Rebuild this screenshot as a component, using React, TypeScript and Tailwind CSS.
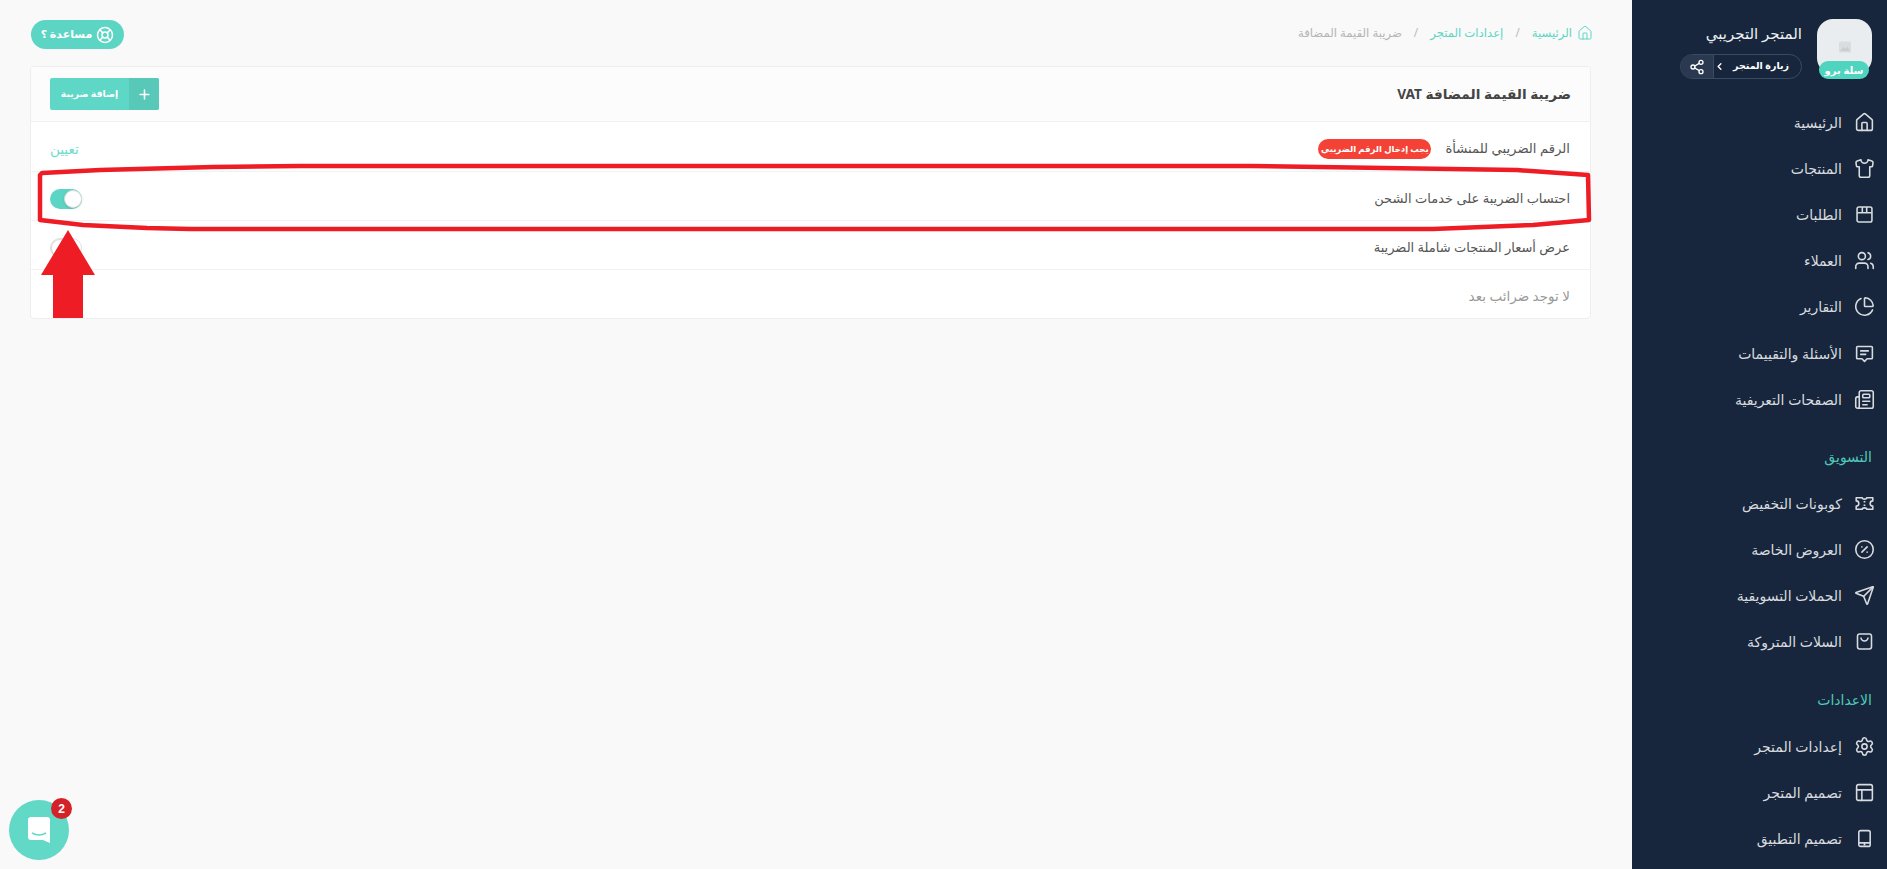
import React from "react";
import { ChevronRight, Share2, Settings, Send, Plus, LifeBuoy, Shirt, Users, PieChart, Newspaper, CirclePercent, House, PanelsTopLeft } from "lucide-react";

type IconProps = { className?: string; strokeWidth?: number };

function BoxIcon({ className, strokeWidth }: IconProps) {
  return (
    <svg className={className} viewBox="0 0 24 24" fill="none" stroke="currentColor" strokeWidth={strokeWidth}>
      <rect x="3.5" y="3.5" width="17" height="17" rx="2" />
      <path d="M3.5 10h17M9.5 3.5V10M14.5 3.5V10" />
    </svg>
  );
}

function ChatIcon({ className, strokeWidth }: IconProps) {
  return (
    <svg className={className} viewBox="0 0 24 24" fill="none" stroke="currentColor" strokeWidth={strokeWidth} strokeLinejoin="round">
      <path d="M4 4h16a1 1 0 0 1 1 1v12a1 1 0 0 1-1 1h-5l-3 3-3-3H4a1 1 0 0 1-1-1V5a1 1 0 0 1 1-1z" />
      <path d="M7 9h10M7 13h7" />
    </svg>
  );
}

function TicketIcon({ className, strokeWidth }: IconProps) {
  return (
    <svg className={className} viewBox="0 0 24 24" fill="none" stroke="currentColor" strokeWidth={strokeWidth} strokeLinejoin="round">
      <path d="M2.5 5.5H9.5a2.5 1.5 0 0 0 5 0h7v3.5a3 3 0 0 0 0 6v3.5h-7a2.5 1.5 0 0 0-5 0H2.5V15a3 3 0 0 0 0-6z" />
      <path d="M11 10h2M11 14h2" />
    </svg>
  );
}

function BagIcon({ className, strokeWidth }: IconProps) {
  return (
    <svg className={className} viewBox="0 0 24 24" fill="none" stroke="currentColor" strokeWidth={strokeWidth}>
      <rect x="4" y="3.5" width="16" height="17" rx="2.5" />
      <path d="M8 7.5a4 4 0 0 0 8 0" />
    </svg>
  );
}

function DeviceIcon({ className, strokeWidth }: IconProps) {
  return (
    <svg className={className} viewBox="0 0 24 24" fill="none" stroke="currentColor" strokeWidth={strokeWidth}>
      <rect x="5.5" y="3" width="13" height="18" rx="2" />
      <path d="M5.5 17h13M11 19h2" />
    </svg>
  );
}

const mainLinks = [
  { label: "الرئيسية", icon: House },
  { label: "المنتجات", icon: Shirt },
  { label: "الطلبات", icon: BoxIcon },
  { label: "العملاء", icon: Users },
  { label: "التقارير", icon: PieChart },
  { label: "الأسئلة والتقييمات", icon: ChatIcon },
  { label: "الصفحات التعريفية", icon: Newspaper },
];

const marketingLinks = [
  { label: "كوبونات التخفيض", icon: TicketIcon },
  { label: "العروض الخاصة", icon: CirclePercent },
  { label: "الحملات التسويقية", icon: Send },
  { label: "السلات المتروكة", icon: BagIcon },
];

const settingsLinks = [
  { label: "إعدادات المتجر", icon: Settings },
  { label: "تصميم المتجر", icon: PanelsTopLeft },
  { label: "تصميم التطبيق", icon: DeviceIcon },
];

function NavList({ links }: { links: { label: string; icon: React.ElementType }[] }) {
  return (
    <ul className="flex flex-col">
      {links.map((link) => (
        <li key={link.label} className="flex h-[46.2px] items-center gap-[12px] text-[14px] text-[#d8dbdf]">
          <link.icon className="h-[21px] w-[21px] shrink-0" strokeWidth={1.8} />
          <span>{link.label}</span>
        </li>
      ))}
    </ul>
  );
}

function Sidebar() {
  return (
    <aside className="h-full w-[255px] shrink-0 overflow-hidden bg-[#17263c] pr-[12px]">
      <div className="flex gap-[15px] pt-[19px] pr-[3px] pb-[20px]">
        <div className="relative h-[60px] w-[55px] shrink-0">
          <div className="flex h-[55px] w-[55px] items-center justify-center rounded-[16px] bg-[#e9edf0]">
            <svg className="h-[12px] w-[12px]" viewBox="0 0 12 12">
              <rect width="12" height="11" y="0.5" rx="1" fill="#d9dde0" />
              <path d="M1 10 L4.5 6 L6.5 8 L8.5 5.5 L11 10 Z" fill="#c9cdd1" />
            </svg>
          </div>
          <span className="absolute bottom-0 left-[2px] flex h-[18px] w-[50px] items-center justify-center rounded-full bg-[#4fd4c0] text-[10px] font-bold whitespace-nowrap text-white">سلة برو</span>
        </div>
        <div className="flex flex-col">
          <h1 className="mt-[2px] text-[15px] leading-[24px] font-medium text-[#eef0f2]">المتجر التجريبي</h1>
          <div className="mt-[9px] flex h-[25px] w-[122px] items-center overflow-hidden rounded-full border border-[#3a4a60] text-white">
            <span className="flex flex-1 items-center gap-[8px] pr-[12px] text-[9.5px] font-bold whitespace-nowrap">
              زيارة المتجر
              <ChevronRight className="h-[11px] w-[11px] rotate-180" strokeWidth={3} />
            </span>
            <span className="flex h-full w-[36px] items-center justify-center border-r border-[#3a4a60] bg-[#2a3950]">
              <Share2 className="h-[16px] w-[16px]" strokeWidth={2} />
            </span>
          </div>
        </div>
      </div>
      <NavList links={mainLinks} />
      <h3 className="mt-[24px] mb-[12px] pr-[3px] text-[14px] leading-[22px] text-[#4fc9b8]">التسويق</h3>
      <NavList links={marketingLinks} />
      <h3 className="mt-[24px] mb-[12px] pr-[3px] text-[14px] leading-[22px] text-[#4fc9b8]">الاعدادات</h3>
      <NavList links={settingsLinks} />
    </aside>
  );
}

function Row({ children, end }: { children: React.ReactNode; end?: React.ReactNode }) {
  return (
    <div className="flex h-[49px] items-center justify-between border-b border-[#f2f2f2] pt-[5px] pr-[20px] pl-[19px] text-[13.5px] text-[#555] first:h-[50px] last:h-[48px] last:border-b-0">
      <div className="flex items-center gap-[14px]">{children}</div>
      {end}
    </div>
  );
}

function Toggle({ on }: { on?: boolean }) {
  return (
    <span className={on ? "mt-[1px] flex h-[20px] w-[32px] items-center justify-start rounded-full bg-[#5dd5c4]" : "mt-[1px] flex h-[20px] w-[32px] items-center justify-end rounded-full border border-[#e0e0e0] bg-white"}>
      <span className="h-[18px] w-[18px] rounded-full border border-[#dcdcdc] bg-white shadow-sm"></span>
    </span>
  );
}

function Main() {
  return (
    <main className="relative h-full flex-1 overflow-hidden bg-[#f9f9f9] pt-[20px] pr-[41px] pl-[30px]">
      <div className="flex h-[29px] items-center justify-between pl-[1px]">
        <nav className="-mt-[3px] flex items-center gap-[10px] text-[11.7px] text-[#5dd5c4]">
          <House className="-mr-[2px] h-[16px] w-[16px]" strokeWidth={1.5} />
          <span className="-mr-[5px]">الرئيسية</span>
          <span className="mx-[2px] text-[#bbb]">/</span>
          <span>إعدادات المتجر</span>
          <span className="mx-[2px] text-[#bbb]">/</span>
          <span className="text-[#b5b5b5]">ضريبة القيمة المضافة</span>
        </nav>
        <button className="flex h-[29px] w-[93px] items-center justify-center gap-[4px] rounded-full bg-[#5dd5c4] text-[11px] font-bold whitespace-nowrap text-white">
          <LifeBuoy className="h-[18px] w-[18px]" strokeWidth={2} />
          مساعدة ؟
        </button>
      </div>
      <section className="mt-[17px] overflow-hidden rounded-[4px] border border-[#eeeeee] bg-white">
        <header className="flex h-[55px] items-center justify-between border-b border-[#f0f0f0] bg-[#fcfcfc] px-[19px]">
          <h2 className="text-[13.7px] font-bold text-[#444]">ضريبة القيمة المضافة VAT</h2>
          <button className="flex h-[32px] w-[109px] overflow-hidden rounded-[2px] bg-[#5fd7c6] text-[9.3px] font-bold whitespace-nowrap text-white">
            <span className="flex h-full w-[30px] items-center justify-center bg-[#58c9b9]">
              <Plus className="h-[15px] w-[15px]" strokeWidth={2.5} />
            </span>
            <span className="flex h-full flex-1 items-center justify-center">إضافة ضريبة</span>
          </button>
        </header>
        <div>
          <Row end={<span className="text-[#6ddccd]">تعيين</span>}>
            <span className="text-[13.2px]">الرقم الضريبي للمنشأة</span>
            <span className="flex h-[20px] w-[113px] items-center justify-center rounded-full bg-[#f44336] text-[8.5px] font-bold whitespace-nowrap text-white">يجب إدخال الرقم الضريبي</span>
          </Row>
          <Row end={<Toggle on />}>
            <span className="text-[13px]">احتساب الضريبة على خدمات الشحن</span>
          </Row>
          <Row end={<Toggle />}>
            <span className="text-[13px]">عرض أسعار المنتجات شاملة الضريبة</span>
          </Row>
          <Row>
            <span className="text-[#999]">لا توجد ضرائب بعد</span>
          </Row>
        </div>
      </section>

      {/* annotation drawn on top of the screenshot */}
      <svg className="absolute top-0 left-0 h-[340px] w-[1632px]" viewBox="0 0 1632 340" fill="none">
        <path d="M40 175 L42 173 L100 170 L213 167 L300 166 L1250 166 L1517 170 L1588 175 L1589 220 L1533 225 L1433 229 L190 229 L147 228 L83 225 L40 220 Z" stroke="#ee1c25" strokeWidth="4.5" strokeLinejoin="round" />
        <path d="M68 230 L95 275 L83 275 L83 318 L53 318 L53 275 L41 275 Z" fill="#ee1c25" />
      </svg>

      <div className="absolute bottom-[9px] left-[9px] flex h-[60px] w-[60px] items-center justify-center rounded-full bg-[#62d8c6]">
        <svg className="h-[26px] w-[22px]" viewBox="0 0 22 26" fill="white">
          <path d="M3 0H19A3 3 0 0 1 22 3V26L15 23H3A3 3 0 0 1 0 20V3A3 3 0 0 1 3 0Z" />
          <path d="M4 16Q11 20 18 16" stroke="#62d8c6" strokeWidth="1.5" fill="none" />
        </svg>
        <span className="absolute -top-[2px] -right-[3px] flex h-[21px] w-[21px] items-center justify-center rounded-full bg-[#d32228] font-['Liberation_Sans',sans-serif] text-[12px] font-bold text-white">2</span>
      </div>
    </main>
  );
}

export default function App() {
  return (
    <div dir="rtl" className="flex h-screen w-full overflow-hidden font-['Noto_Sans','DejaVu_Sans',sans-serif]">
      <Sidebar />
      <Main />
    </div>
  );
}
